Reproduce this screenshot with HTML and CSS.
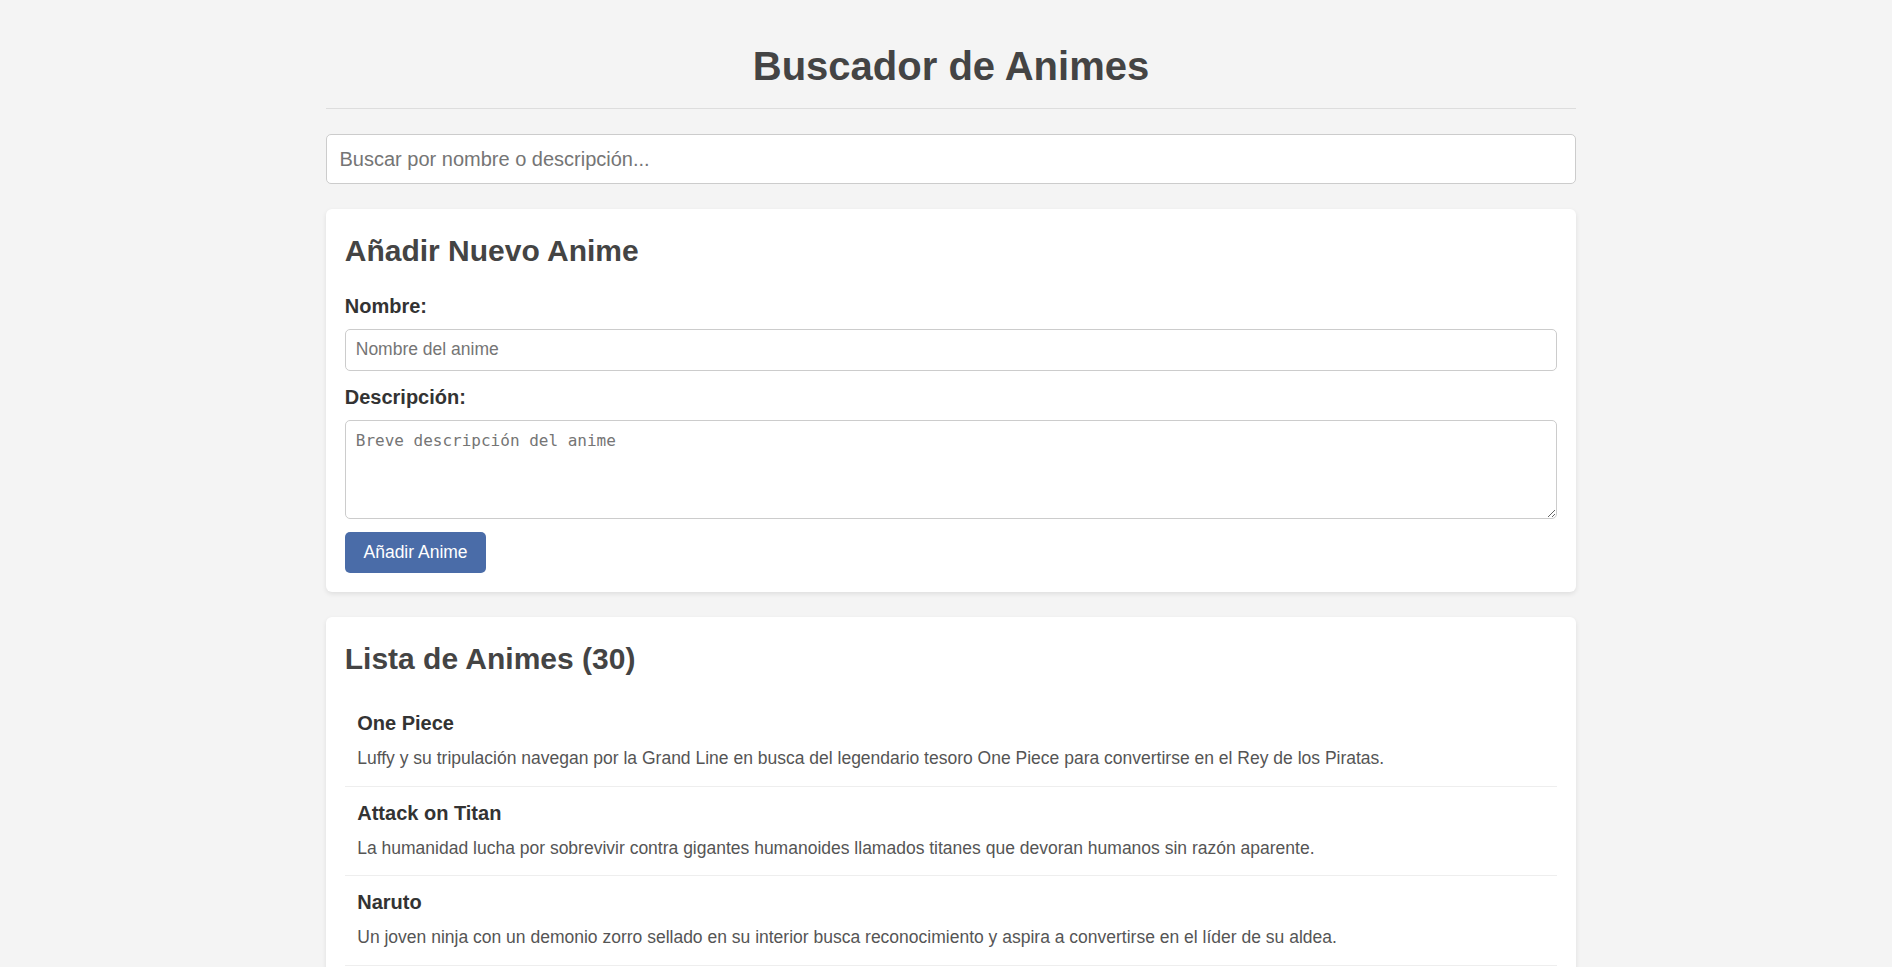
FILE: index.html
```html
<!DOCTYPE html>
<html lang="es">
<head>
<meta charset="utf-8">
<title>Buscador de Animes</title>
<link rel="stylesheet" href="styles.css">
</head>
<body>
<div class="container">
  <header class="page-header">
    <h1 class="page-title">Buscador de Animes</h1>
  </header>

  <input class="search-input" type="text" placeholder="Buscar por nombre o descripción...">

  <section class="card form-card">
    <h2 class="card-title form-title">Añadir Nuevo Anime</h2>
    <form class="anime-form">
      <label class="field-label" for="nombre">Nombre:</label>
      <input class="field-input" id="nombre" type="text" placeholder="Nombre del anime">
      <label class="field-label" for="descripcion">Descripción:</label>
      <textarea class="field-textarea" id="descripcion" placeholder="Breve descripción del anime"></textarea>
      <button class="btn-primary" type="button">Añadir Anime</button>
    </form>
  </section>

  <section class="card list-card">
    <h2 class="card-title list-title">Lista de Animes (30)</h2>
    <ul class="anime-list">
      <li class="anime-item">
        <h3 class="anime-name">One Piece</h3>
        <p class="anime-desc">Luffy y su tripulación navegan por la Grand Line en busca del legendario tesoro One Piece para convertirse en el Rey de los Piratas.</p>
      </li>
      <li class="anime-item">
        <h3 class="anime-name">Attack on Titan</h3>
        <p class="anime-desc">La humanidad lucha por sobrevivir contra gigantes humanoides llamados titanes que devoran humanos sin razón aparente.</p>
      </li>
      <li class="anime-item">
        <h3 class="anime-name">Naruto</h3>
        <p class="anime-desc">Un joven ninja con un demonio zorro sellado en su interior busca reconocimiento y aspira a convertirse en el líder de su aldea.</p>
      </li>
      <li class="anime-item">
        <h3 class="anime-name">Death Note</h3>
        <p class="anime-desc">Un estudiante encuentra un cuaderno sobrenatural que le permite matar a cualquiera cuyo nombre escriba en él.</p>
      </li>
      <li class="anime-item">
        <h3 class="anime-name">Fullmetal Alchemist: Brotherhood</h3>
        <p class="anime-desc">Dos hermanos alquimistas buscan la Piedra Filosofal para recuperar sus cuerpos tras un fallido intento de resucitar a su madre.</p>
      </li>
      <li class="anime-item">
        <h3 class="anime-name">Dragon Ball Z</h3>
        <p class="anime-desc">Goku y sus amigos defienden la Tierra de poderosos enemigos mientras buscan las esferas del dragón.</p>
      </li>
    </ul>
  </section>
</div>
</body>
</html>
```

FILE: styles.css
```css
* {
  box-sizing: border-box;
}

html, body {
  margin: 0;
}

body {
  background: #f4f4f4;
  font-family: "Liberation Sans", Arial, sans-serif;
  color: #333;
  padding: 0 0 40px 10px;
}

.container {
  width: 1250px;
  margin: 0 auto;
  padding-top: 43px;
}

.page-header {
  padding-bottom: 19px;
  border-bottom: 1px solid #dddddd;
}

.page-title {
  margin: 0;
  font-size: 40px;
  line-height: 46px;
  font-weight: 700;
  color: #444;
  text-align: center;
}

.search-input {
  display: block;
  width: 100%;
  height: 50px;
  margin: 25px 0;
  padding: 0 12.5px;
  border: 1px solid #cccccc;
  border-radius: 5px;
  background: #fff;
  font-family: "Liberation Sans", Arial, sans-serif;
  font-size: 20px;
  color: #333;
}

.search-input::placeholder,
.field-input::placeholder {
  color: #757575;
}

.card {
  background: #fff;
  border-radius: 6px;
  box-shadow: 0 2px 5px rgba(0, 0, 0, 0.09);
  padding: 18.75px;
  margin-bottom: 25px;
}

.card-title {
  margin: 6.5px 0 0;
  font-size: 30px;
  line-height: 34.5px;
  font-weight: 700;
  color: #444;
}

.form-title {
  margin-bottom: 26.5px;
}

.list-title {
  margin-bottom: 21px;
}

.anime-form {
  display: flex;
  flex-direction: column;
  align-items: flex-start;
}

.field-label {
  display: block;
  font-size: 20px;
  line-height: 23px;
  font-weight: 700;
  color: #333;
  margin-bottom: 10.5px;
}

.field-input {
  display: block;
  width: 100%;
  height: 42px;
  padding: 0 10px;
  border: 1px solid #cccccc;
  border-radius: 5px;
  font-family: "Liberation Sans", Arial, sans-serif;
  font-size: 17.5px;
  color: #333;
  margin-bottom: 15.5px;
}

.field-textarea {
  display: block;
  width: 100%;
  height: 99px;
  padding: 10px;
  border: 1px solid #cccccc;
  border-radius: 5px;
  font-family: "DejaVu Sans Mono", monospace;
  font-size: 16px;
  line-height: 19px;
  color: #333;
  margin-bottom: 13px;
  resize: vertical;
}

.field-textarea::placeholder {
  color: #757575;
}

.btn-primary {
  height: 41px;
  padding: 0 18.75px;
  border: 0;
  border-radius: 5px;
  background: #4a6ca8;
  color: #fff;
  font-family: "Liberation Sans", Arial, sans-serif;
  font-size: 17.5px;
  cursor: pointer;
}

.anime-list {
  list-style: none;
  margin: 0;
  padding: 0;
}

.anime-item {
  padding: 15px 12.5px 14.5px;
  border-bottom: 1px solid #eeeeee;
}

.anime-item:last-child {
  border-bottom: 0;
}

.anime-name {
  margin: 0 0 10px;
  font-size: 20px;
  line-height: 23px;
  font-weight: 700;
  color: #333;
}

.anime-desc {
  margin: 0;
  font-size: 17.5px;
  line-height: 26px;
  color: #555;
}
```
